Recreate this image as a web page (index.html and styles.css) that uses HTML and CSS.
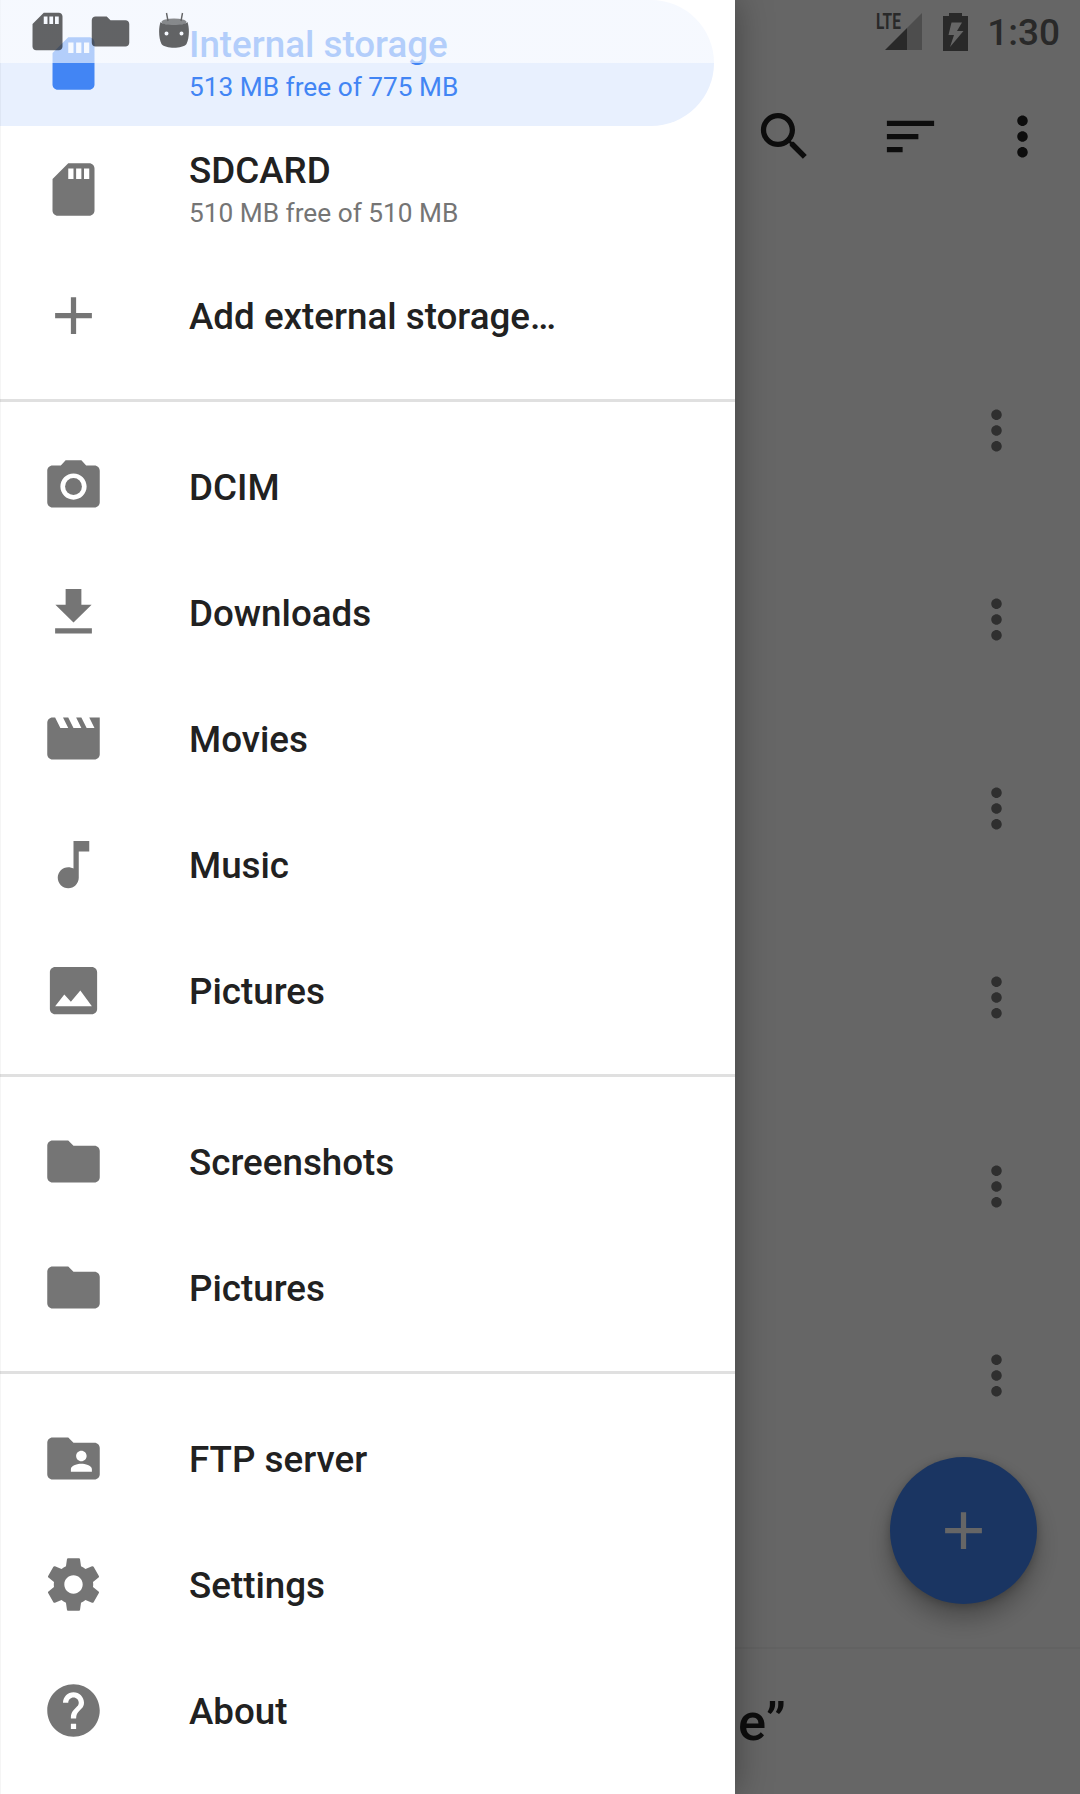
FILE: index.html
```html
<!DOCTYPE html>
<html lang="en">
<head>
<meta charset="utf-8">
<title>Files</title>
<link rel="stylesheet" href="styles.css">
</head>
<body>
<svg class="defs" aria-hidden="true">
  <symbol id="sd" viewBox="0 0 24 24"><path d="M18 2h-8L4.02 8 4 20c0 1.1.9 2 2 2h12c1.1 0 2-.9 2-2V4c0-1.1-.9-2-2-2zm-6 6h-2V4h2v4zm3 0h-2V4h2v4zm3 0h-2V4h2v4z"/></symbol>
  <symbol id="add" viewBox="0 0 24 24"><path d="M19 13h-6v6h-2v-6H5v-2h6V5h2v6h6v2z"/></symbol>
  <symbol id="folder" viewBox="0 0 24 24"><path d="M10 4H4c-1.100 0-1.990.9-1.990 2L2 18c0 1.100.9 2 2 2h16c1.100 0 2-.9 2-2V8c0-1.100-.9-2-2-2h-8l-2-2z"/></symbol>
  <symbol id="more" viewBox="0 0 24 24"><path d="M12 8c1.100 0 2-.9 2-2s-.9-2-2-2-2 .9-2 2 .9 2 2 2zm0 2c-1.100 0-2 .9-2 2s.9 2 2 2 2-.9 2-2-.9-2-2-2zm0 6c-1.100 0-2 .9-2 2s.9 2 2 2 2-.9 2-2-.9-2-2-2z"/></symbol>
</svg>
<div class="screen">
  <main class="content">
    <header class="toolbar">
      <svg class="icon" viewBox="0 0 24 24"><path d="M15.500 14h-.79l-.28-.27C15.410 12.590 16 11.110 16 9.500 16 5.910 13.090 3 9.500 3S3 5.910 3 9.500 5.910 16 9.500 16c1.610 0 3.090-.59 4.230-1.570l.27.28v.79l5 4.990L20.490 19l-4.990-5zm-6 0C7.010 14 5 11.990 5 9.500S7.010 5 9.500 5 14 7.010 14 9.500 11.990 14 9.500 14z"/></svg>
      <svg class="icon" viewBox="0 0 24 24"><path d="M3 18h6v-2H3v2zM3 6v2h18V6H3zm0 7h12v-2H3v2z"/></svg>
      <svg class="icon" viewBox="0 0 24 24"><use href="#more"/></svg>
    </header>
    <ul class="files">
      <li><svg class="icon"><use href="#more"/></svg></li>
      <li><svg class="icon"><use href="#more"/></svg></li>
      <li><svg class="icon"><use href="#more"/></svg></li>
      <li><svg class="icon"><use href="#more"/></svg></li>
      <li><svg class="icon"><use href="#more"/></svg></li>
      <li><svg class="icon"><use href="#more"/></svg></li>
    </ul>
    <footer class="bottom-bar"><span>e”</span></footer>
    <div class="fab"><svg class="icon"><use href="#add"/></svg></div>
  </main>
  <div class="scrim"></div>
  <nav class="drawer">
    <section>
      <a class="item selected"><svg class="icon"><use href="#sd"/></svg><div class="label two"><b>Internal storage</b><small>513 MB free of 775 MB</small></div></a>
      <a class="item"><svg class="icon"><use href="#sd"/></svg><div class="label two"><b>SDCARD</b><small>510 MB free of 510 MB</small></div></a>
      <a class="item"><svg class="icon"><use href="#add"/></svg><div class="label"><b>Add external storage…</b></div></a>
    </section>
    <section>
      <a class="item"><svg class="icon" viewBox="0 0 24 24"><circle cx="12" cy="12" r="3.200"/><path d="M9 2L7.170 4H4c-1.100 0-2 .9-2 2v12c0 1.100.9 2 2 2h16c1.100 0 2-.9 2-2V6c0-1.100-.9-2-2-2h-3.170L15 2H9zm3 15c-2.760 0-5-2.240-5-5s2.240-5 5-5 5 2.240 5 5-2.240 5-5 5z"/></svg><div class="label"><b>DCIM</b></div></a>
      <a class="item"><svg class="icon" viewBox="0 0 24 24"><path d="M18.900 9H15V3H9v6H5.100l6.900 6.800zM5 18v2h14v-2H5z"/></svg><div class="label"><b>Downloads</b></div></a>
      <a class="item"><svg class="icon" viewBox="0 0 24 24"><path d="M18 4l2 4h-3l-2-4h-2l2 4h-3l-2-4H8l2 4H7L5 4H4c-1.100 0-1.990.9-1.990 2L2 18c0 1.100.9 2 2 2h16c1.100 0 2-.9 2-2V4h-4z"/></svg><div class="label"><b>Movies</b></div></a>
      <a class="item"><svg class="icon" viewBox="0 0 24 24"><path d="M12 3v10.550c-.59-.34-1.270-.55-2-.55-2.210 0-4 1.790-4 4s1.790 4 4 4 4-1.790 4-4V7h4V3h-6z"/></svg><div class="label"><b>Music</b></div></a>
      <a class="item"><svg class="icon" viewBox="0 0 24 24"><path fill-rule="evenodd" d="M21 19V5c0-1.100-.9-2-2-2H5c-1.100 0-2 .9-2 2v14c0 1.100.9 2 2 2h14c1.100 0 2-.9 2-2zM8.500 13.500l2.500 2.800 3.600-4.300L19 18H5l3.500-4.500z"/></svg><div class="label"><b>Pictures</b></div></a>
    </section>
    <section>
      <a class="item"><svg class="icon"><use href="#folder"/></svg><div class="label"><b>Screenshots</b></div></a>
      <a class="item"><svg class="icon"><use href="#folder"/></svg><div class="label"><b>Pictures</b></div></a>
    </section>
    <section>
      <a class="item"><svg class="icon" viewBox="0 0 24 24"><path d="M20 6h-8l-2-2H4c-1.100 0-1.990.9-1.990 2L2 18c0 1.100.9 2 2 2h16c1.100 0 2-.9 2-2V8c0-1.100-.9-2-2-2zm-5 3c1.100 0 2 .9 2 2s-.9 2-2 2-2-.9-2-2 .9-2 2-2zm4 8h-8v-1c0-1.330 2.670-2 4-2s4 .67 4 2v1z"/></svg><div class="label"><b>FTP server</b></div></a>
      <a class="item"><svg class="icon" viewBox="0 0 24 24"><path d="M19.430 12.980c.04-.32.07-.64.07-.98s-.03-.66-.07-.98l2.110-1.650c.19-.15.24-.42.12-.64l-2-3.460c-.12-.22-.39-.3-.61-.22l-2.490 1c-.52-.4-1.080-.73-1.690-.98l-.38-2.650C14.460 2.180 14.250 2 14 2h-4c-.25 0-.46.18-.49.42l-.38 2.650c-.61.25-1.170.59-1.690.98l-2.490-1c-.23-.09-.49 0-.61.22l-2 3.460c-.13.22-.07.49.12.64l2.110 1.650c-.04.32-.07.65-.07.98s.03.66.07.98l-2.110 1.650c-.19.15-.24.42-.12.64l2 3.460c.12.22.39.3.61.22l2.490-1c.52.4 1.080.73 1.690.98l.38 2.650c.03.24.24.42.49.42h4c.25 0 .46-.18.49-.42l.38-2.650c.61-.25 1.170-.59 1.690-.98l2.490 1c.23.09.49 0 .61-.22l2-3.460c.12-.22.07-.49-.12-.64l-2.110-1.650zM12 15.500c-1.930 0-3.500-1.570-3.500-3.500s1.570-3.500 3.500-3.500 3.500 1.570 3.500 3.500-1.570 3.500-3.500 3.500z"/></svg><div class="label"><b>Settings</b></div></a>
      <a class="item"><svg class="icon" viewBox="0 0 24 24"><path d="M12 2C6.480 2 2 6.480 2 12s4.480 10 10 10 10-4.480 10-10S17.520 2 12 2zm1 17h-2v-2h2v2zm2.070-7.750l-.9.920C13.450 12.900 13 13.500 13 15h-2v-.5c0-1.100.45-2.100 1.170-2.830l1.240-1.260c.37-.36.59-.86.59-1.410 0-1.100-.9-2-2-2s-2 .9-2 2H8c0-2.210 1.790-4 4-4s4 1.790 4 4c0 .88-.36 1.680-.93 2.250z"/></svg><div class="label"><b>About</b></div></a>
    </section>
  </nav>
  <div class="status">
    <svg class="note"><use href="#sd"/></svg>
    <svg class="note"><use href="#folder"/></svg>
    <svg class="note" viewBox="0 0 45 45"><path d="M15.500 4l1.500 8M31.500 4l-1.500 8" fill="none" stroke="#000" stroke-width="1.400"/><ellipse cx="23" cy="13" rx="12.500" ry="3.500" opacity=".75"/><path fill-rule="evenodd" d="M9.500 13c3 4 24 4 27 0 2 6 2 16-1 22-4 5-21 5-25 0-3-6-3-16-1-22zM15.500 22.500a2 2 0 1 0 0 4 2 2 0 0 0 0-4zM30.500 22.500a2 2 0 1 0 0 4 2 2 0 0 0 0-4z"/></svg>
    <div class="system">
      <span class="lte">LTE</span>
      <svg class="signal" viewBox="0 0 37 37"><path opacity=".4" d="M22 15L37 0v37H22z"/><path d="M0 37L22 15v22z"/></svg>
      <svg class="battery" viewBox="0 0 25 38"><path fill-rule="evenodd" d="M6 0h13v3h6v35H0V3h6zM8.500 9.500L5.500 22H11L7 34 20.500 18H14L19 9.500z"/></svg>
      <span class="clock">1:30</span>
    </div>
  </div>
</div>
</body>
</html>
```
FILE: styles.css
```css
body { margin: 0; font-family: Roboto, "Noto Sans", sans-serif; }
.defs { position: absolute; width: 0; height: 0; }
.screen { position: relative; width: 1080px; height: 1794px; overflow: hidden; background: #fff; }
.icon { display: block; flex: none; width: 63px; height: 63px; fill: currentColor; }

.content { display: flex; flex-direction: column; height: 100%; box-sizing: border-box; padding-top: 63px; }
.toolbar { display: flex; justify-content: flex-end; align-items: center; gap: 63px; height: 147px; padding-right: 26px; color: #212121; }
.toolbar .icon:last-child { margin-left: -14px; }
.files { flex: 1; margin: 0; padding: 126px 52px 0 0; list-style: none; color: #757575; }
.files li { display: flex; justify-content: flex-end; align-items: center; height: 189px; }
.bottom-bar { display: flex; align-items: center; height: 147px; padding-left: 738px; box-sizing: border-box; border-top: 2px solid #f6f6f6; color: #212121; font-size: 52.500px; font-weight: 500; }
.fab { position: absolute; left: 890px; top: 1457px; width: 147px; height: 147px; display: flex; align-items: center; justify-content: center; border-radius: 50%; background: #4285f4; color: #fff; box-shadow: 0 14px 24px rgba(0,0,0,.28), 0 2px 8px rgba(0,0,0,.2); }
.scrim { position: absolute; inset: 0; background: rgba(0,0,0,.6); }

.drawer { position: absolute; left: 0; top: 0; width: 735px; height: 1794px; background: #fff; color: #757575; box-shadow: 0 0 34px rgba(0,0,0,.36); }
.drawer::after { content: ""; position: absolute; left: 0; top: 0; width: 1px; height: 100%; background: rgba(0,0,0,.04); }
.drawer section { padding-bottom: 21px; }
.drawer section + section { padding-top: 21px; border-top: 3px solid #e0e0e0; }
.item { display: flex; align-items: center; gap: 84px; height: 126px; width: 714px; box-sizing: border-box; padding-left: 42px; }
.label { display: flex; flex-direction: column; padding-top: 3px; }
.label b { color: #212121; font-size: 36.750px; font-weight: 500; line-height: 44px; white-space: nowrap; }
.label small { font-size: 26.250px; line-height: 34px; margin-top: 3px; white-space: nowrap; }
.label.two { padding-top: 0; }
.selected { background: #e8f0fe; border-radius: 0 63px 63px 0; color: #4285f4; }
.selected .label b { color: inherit; }

.status { position: absolute; left: 0; top: 0; width: 1080px; height: 63px; display: flex; align-items: center; gap: 18px; padding-left: 25px; box-sizing: border-box; background: linear-gradient(90deg, rgba(255,255,255,.6) 735px, transparent 735px); }
.note { width: 45px; height: 45px; opacity: .6; }
.system { display: flex; align-items: flex-start; margin-left: auto; height: 37px; padding-right: 20px; color: #292929; fill: #292929; }
.lte { width: 9px; font-size: 22px; font-weight: 700; line-height: 18px; transform: scaleX(.7); transform-origin: left; }
.signal { width: 37px; height: 37px; }
.battery { width: 25px; height: 38px; margin-left: 21px; }
.clock { margin-left: 19px; font-size: 37px; font-weight: 500; line-height: 40px; }
```
